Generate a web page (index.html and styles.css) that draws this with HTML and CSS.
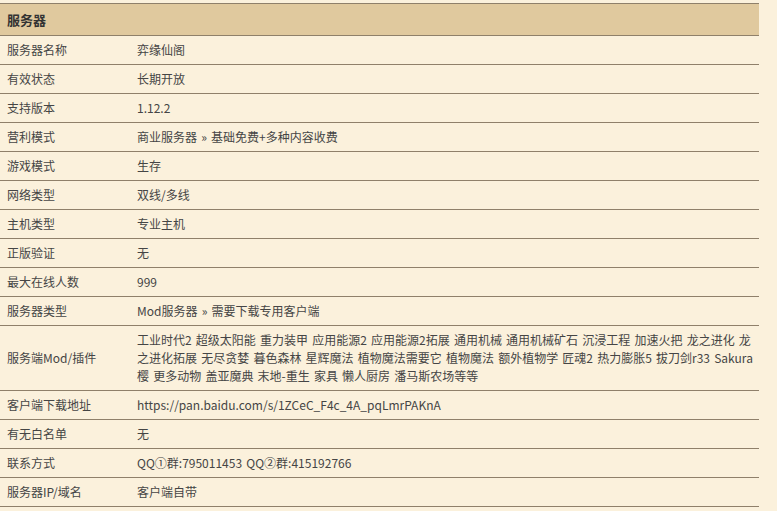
FILE: index.html
```html
<!DOCTYPE html>
<html lang="zh-CN">
<head>
<meta charset="utf-8">
<title>服务器</title>
<link rel="stylesheet" href="styles.css">
</head>
<body>
<table class="info">
  <thead>
    <tr><th colspan="2" class="head">服务器</th></tr>
  </thead>
  <tbody>
    <tr><td class="k">服务器名称</td><td class="v">弈缘仙阁</td></tr>
    <tr><td class="k">有效状态</td><td class="v">长期开放</td></tr>
    <tr><td class="k">支持版本</td><td class="v">1.12.2</td></tr>
    <tr><td class="k">营利模式</td><td class="v">商业服务器 » 基础免费+多种内容收费</td></tr>
    <tr><td class="k">游戏模式</td><td class="v">生存</td></tr>
    <tr><td class="k">网络类型</td><td class="v">双线/多线</td></tr>
    <tr><td class="k">主机类型</td><td class="v">专业主机</td></tr>
    <tr><td class="k">正版验证</td><td class="v">无</td></tr>
    <tr><td class="k">最大在线人数</td><td class="v">999</td></tr>
    <tr><td class="k">服务器类型</td><td class="v">Mod服务器 » 需要下载专用客户端</td></tr>
    <tr><td class="k">服务端Mod/插件</td><td class="v">工业时代2 超级太阳能 重力装甲 应用能源2 应用能源2拓展 通用机械 通用机械矿石 沉浸工程 加速火把 龙之进化 龙之进化拓展 无尽贪婪 暮色森林 星辉魔法 植物魔法需要它 植物魔法 额外植物学 匠魂2 热力膨胀5 拔刀剑r33 Sakura樱 更多动物 盖亚魔典 末地-重生 家具 懒人厨房 潘马斯农场等等</td></tr>
    <tr><td class="k">客户端下载地址</td><td class="v">https://pan.baidu.com/s/1ZCeC_F4c_4A_pqLmrPAKnA</td></tr>
    <tr><td class="k">有无白名单</td><td class="v">无</td></tr>
    <tr><td class="k">联系方式</td><td class="v">QQ①群:795011453 QQ②群:415192766</td></tr>
    <tr><td class="k">服务器IP/域名</td><td class="v">客户端自带</td></tr>
  </tbody>
</table>
</body>
</html>
```
FILE: styles.css
```css
html, body {
  margin: 0;
  padding: 0;
  background: #fbf1dc;
}
body {
  padding-top: 3px;
  font-family: "Microsoft YaHei", "Noto Sans CJK SC", sans-serif;
  font-size: 12px;
  color: #454545;
  word-spacing: 1.5px;
}
.info {
  width: 759px;
  border-collapse: collapse;
  border-top: 1px solid #8f806a;
}
.info th.head {
  background: #e0c99e;
  text-align: left;
  font-size: 13px;
  font-weight: bold;
  color: #333;
  height: 31px;
  padding: 0 7px;
  border-bottom: 1px solid #8f806a;
}
.info td {
  border-bottom: 1px solid #8f806a;
  padding: 5px 0;
  line-height: 18px;
  vertical-align: middle;
}
.info td.k {
  width: 130px;
  padding-left: 7px;
}
.info td.v {
  padding-right: 0;
}
```
